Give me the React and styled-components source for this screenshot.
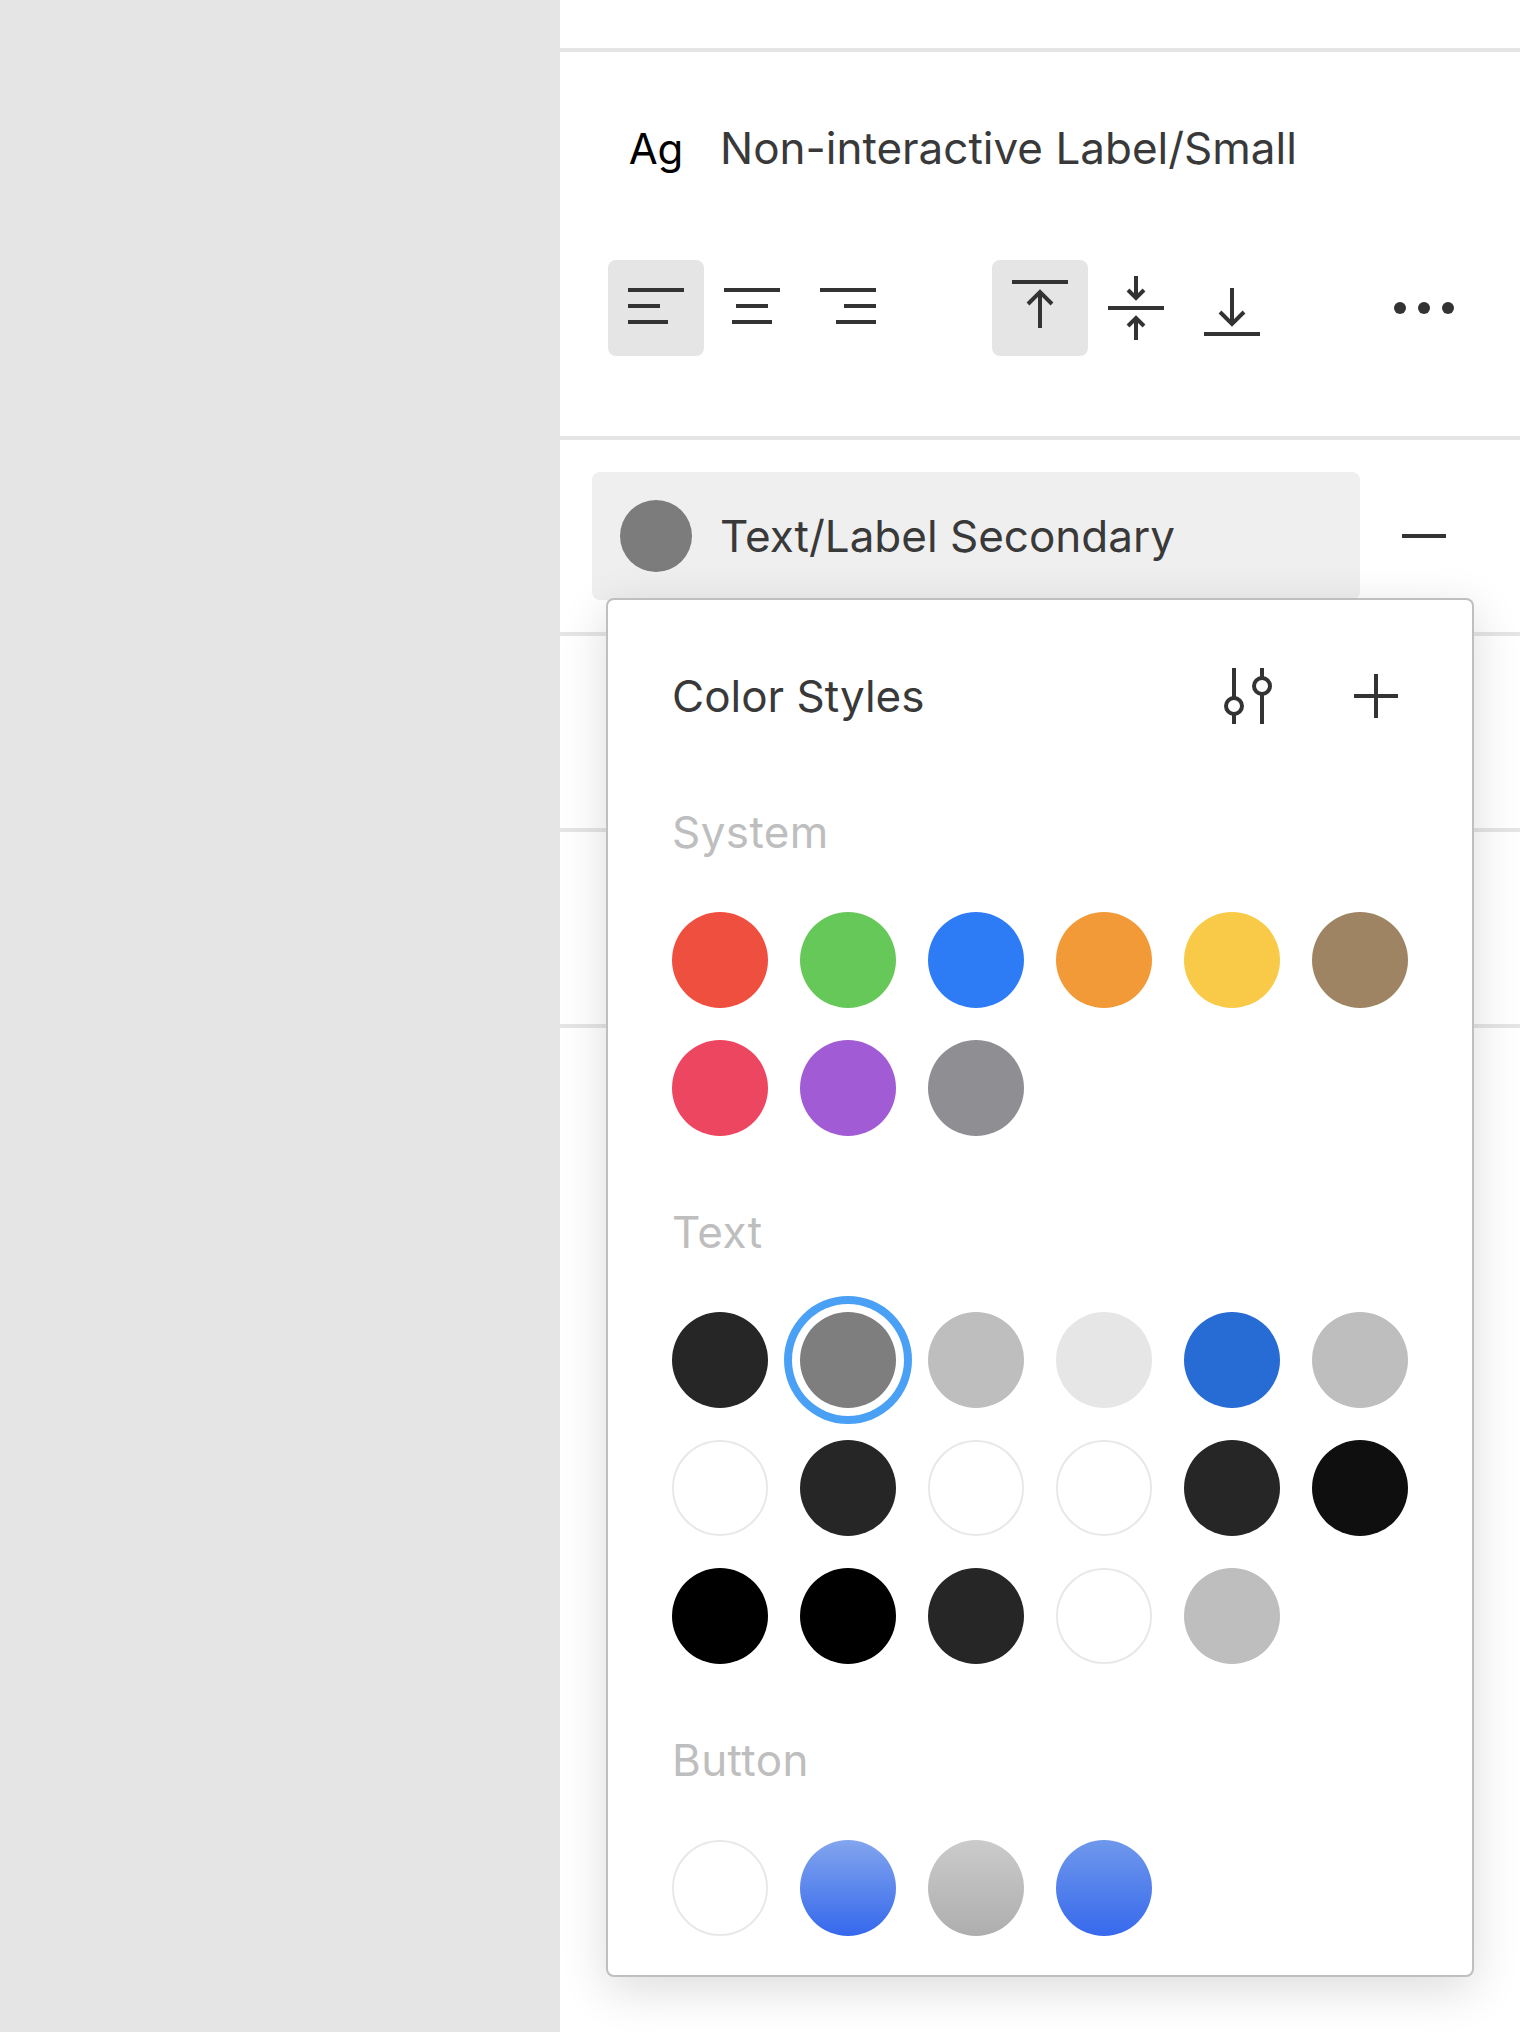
import React from 'react'
import styled, { createGlobalStyle } from 'styled-components'

const INK = '#333333'

const systemColors = ['#ef4f3e', '#66c858', '#2d7cf6', '#f29938', '#f8ca47', '#9e8463', '#ec4660', '#a15bd5', '#8e8e93']
const textColors = [
  '#262626', '#7e7e7e', '#bebebe', '#e6e6e6', '#266cd4', '#bebebe',
  '#ffffff', '#262626', '#ffffff', '#ffffff', '#262626', '#0f0f0f',
  '#000000', '#000000', '#262626', '#ffffff', '#bebebe',
]
const buttonColors = [
  '#ffffff',
  'linear-gradient(180deg, #82a5ee, #3568ec)',
  'linear-gradient(180deg, #cbcbcb, #aeaeae)',
  'linear-gradient(180deg, #6f98ec, #3769ec)',
]

const Icon = ({ children }) => (
  <svg width="96" height="96" viewBox="0 0 96 96" fill="none" stroke={INK} strokeWidth="4">
    {children}
  </svg>
)

const Lines = ({ rows }) => (
  <Icon>
    {rows.map(([from, to, y]) => (
      <path key={y} d={`M${from} ${y}H${to}`} />
    ))}
  </Icon>
)

const Swatches = ({ colors, selected }) => (
  <SwatchGrid>
    {colors.map((color, i) => (
      <Swatch key={i} $color={color} $selected={i === selected} />
    ))}
  </SwatchGrid>
)

export default function App() {
  return (
    <Page>
      <GlobalStyle />
      <Sidebar />
      <Panel>
        <TopBar />
        <Section>
          <TextStyleRow>
            <Glyph>Ag</Glyph>
            <Label>Non-interactive Label/Small</Label>
          </TextStyleRow>
          <AlignRow>
            <ButtonGroup>
              <IconButton $active>
                <Lines rows={[[20, 76, 30], [20, 52, 46], [20, 60, 62]]} />
              </IconButton>
              <IconButton>
                <Lines rows={[[20, 76, 30], [32, 64, 46], [28, 68, 62]]} />
              </IconButton>
              <IconButton>
                <Lines rows={[[20, 76, 30], [44, 76, 46], [36, 76, 62]]} />
              </IconButton>
            </ButtonGroup>
            <ButtonGroup>
              <IconButton $active>
                <Icon>
                  <path d="M20 22H76M48 68V32M36 44L48 32L60 44" />
                </Icon>
              </IconButton>
              <IconButton>
                <Icon>
                  <path d="M20 48H76M48 16V38M40 30L48 38L56 30M48 80V58M40 66L48 58L56 66" />
                </Icon>
              </IconButton>
              <IconButton>
                <Icon>
                  <path d="M20 74H76M48 28V64M36 52L48 64L60 52" />
                </Icon>
              </IconButton>
            </ButtonGroup>
            <IconButton>
              <Icon>
                <circle cx="24" cy="48" r="6" fill={INK} stroke="none" />
                <circle cx="48" cy="48" r="6" fill={INK} stroke="none" />
                <circle cx="72" cy="48" r="6" fill={INK} stroke="none" />
              </Icon>
            </IconButton>
          </AlignRow>
        </Section>
        <FillSection>
          <FillRow>
            <FillChip>
              <FillDot />
              <Label>Text/Label Secondary</Label>
            </FillChip>
            <IconButton>
              <Icon>
                <path d="M26 48H70" />
              </Icon>
            </IconButton>
          </FillRow>
        </FillSection>
        <EmptySection />
        <EmptySection />
        <EmptySection />

        <Popover>
          <PopoverHeader>
            <Label>Color Styles</Label>
            <HeaderActions>
              <IconButton>
                <Icon>
                  <path d="M34 20V76M62 20V76" />
                  <circle cx="34" cy="58" r="8" fill="#fff" />
                  <circle cx="62" cy="38" r="8" fill="#fff" />
                </Icon>
              </IconButton>
              <IconButton>
                <Icon>
                  <path d="M26 48H70M48 26V70" />
                </Icon>
              </IconButton>
            </HeaderActions>
          </PopoverHeader>
          <GroupLabel $first>System</GroupLabel>
          <Swatches colors={systemColors} />
          <GroupLabel>Text</GroupLabel>
          <Swatches colors={textColors} selected={1} />
          <GroupLabel>Button</GroupLabel>
          <Swatches colors={buttonColors} />
        </Popover>
      </Panel>
    </Page>
  )
}

const GlobalStyle = createGlobalStyle`
  html, body {
    margin: 0;
    height: 2032px;
    overflow: hidden;
    background: #fff;
    font-family: Inter, "Liberation Sans", sans-serif;
  }
`

const Page = styled.div`
  display: flex;
  width: 1520px;
  height: 2032px;
`

const Sidebar = styled.aside`
  flex: 0 0 560px;
  background: #e5e5e5;
`

const Panel = styled.main`
  position: relative;
  flex: 1;
`

const TopBar = styled.div`
  height: 48px;
`

const Section = styled.section`
  border-top: 4px solid #e5e5e5;
  padding: 48px 0 80px 48px;
`

const TextStyleRow = styled.div`
  display: flex;
  align-items: center;
  height: 96px;
`

const Glyph = styled.div`
  width: 96px;
  margin-right: 16px;
  text-align: center;
  font-size: 42px;
  color: #000;
`

const Label = styled.span`
  font-size: 44px;
  line-height: 64px;
  color: #393939;
`

const AlignRow = styled.div`
  display: flex;
  gap: 96px;
  margin-top: 64px;
`

const ButtonGroup = styled.div`
  display: flex;
`

const IconButton = styled.div`
  width: 96px;
  height: 96px;
  border-radius: 8px;
  background: ${p => (p.$active ? '#e5e5e5' : 'transparent')};

  svg {
    display: block;
  }
`

const FillSection = styled.section`
  height: 192px;
  border-top: 4px solid #e5e5e5;
`

const FillRow = styled.div`
  display: flex;
  align-items: center;
  gap: 16px;
  padding: 32px 0 0 32px;
`

const FillChip = styled.div`
  display: flex;
  align-items: center;
  gap: 28px;
  box-sizing: border-box;
  width: 768px;
  height: 128px;
  padding-left: 28px;
  border-radius: 8px;
  background: #efefef;
`

const FillDot = styled.div`
  width: 72px;
  height: 72px;
  border-radius: 50%;
  background: #7c7c7c;
`

const EmptySection = styled.section`
  height: 192px;
  border-top: 4px solid #e5e5e5;
`

const Popover = styled.div`
  position: absolute;
  top: 598px;
  left: 46px;
  box-sizing: border-box;
  width: 868px;
  padding: 48px 64px 39px;
  border: 2px solid rgba(0, 0, 0, 0.25);
  border-radius: 8px;
  background: #fff;
  box-shadow: 0 12px 48px rgba(0, 0, 0, 0.14);
`

const PopoverHeader = styled.div`
  display: flex;
  align-items: center;
  justify-content: space-between;
  margin-right: -16px;
`

const HeaderActions = styled.div`
  display: flex;
  gap: 32px;
`

const GroupLabel = styled.div`
  margin: ${p => (p.$first ? '56px' : '64px')} 0 48px;
  font-size: 44px;
  line-height: 64px;
  letter-spacing: 0.4px;
  color: #bebebe;
`

const SwatchGrid = styled.div`
  display: grid;
  grid-template-columns: repeat(6, 96px);
  gap: 32px;
`

const Swatch = styled.div`
  box-sizing: border-box;
  width: 96px;
  height: 96px;
  border-radius: 50%;
  background: ${p => p.$color};
  border: ${p => (p.$color === '#ffffff' ? '2px solid #e8e8e8' : 'none')};
  box-shadow: ${p => (p.$selected ? '0 0 0 8px #fff, 0 0 0 16px #4aa0f5' : 'none')};
`
